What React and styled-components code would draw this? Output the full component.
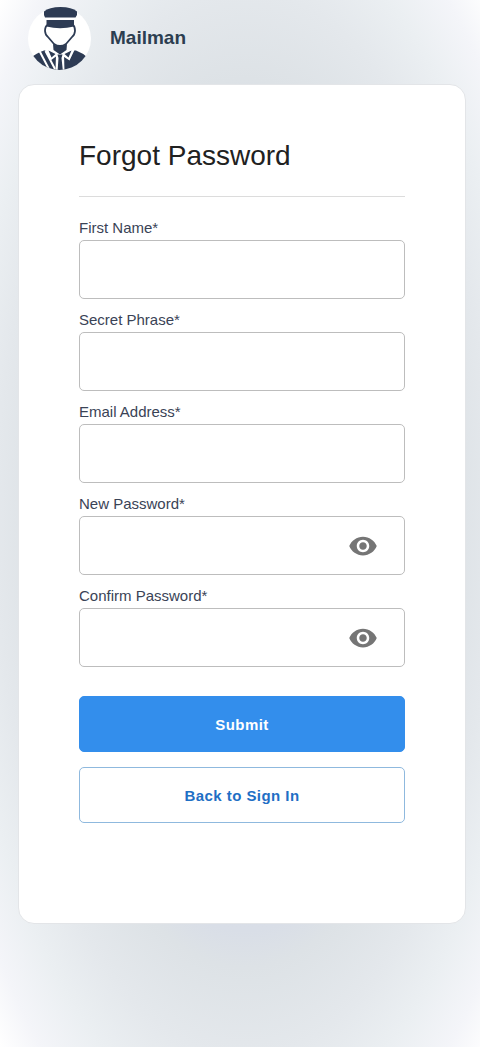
import React, { useState } from "react";
import styled, { createGlobalStyle } from "styled-components";
import { MdVisibility } from "react-icons/md";

const GlobalStyle = createGlobalStyle`
  *, *::before, *::after { box-sizing: border-box; }
  body {
    margin: 0;
    font-family: "Liberation Sans", Arial, sans-serif;
    background: #fff;
  }
`;

const Page = styled.div`
  min-height: 100vh;
  padding: 6px 14px 24px 18px;
  background: radial-gradient(ellipse farthest-corner at 51% 50%, #ccd3df 0%, #d9dee7 55%, #dde2e6 60%, #e4e8ec 72%, #ebeff2 82%, #f4f5f9 92%, #fff 100%);
`;

const Header = styled.header`
  display: flex;
  align-items: center;
  gap: 18px;
  height: 64px;
  padding-left: 10px;
  margin-bottom: 14px;
`;

const Logo = styled.svg`
  width: 64px;
  height: 64px;
  flex: none;
`;

const Brand = styled.span`
  font-size: 19px;
  line-height: 24px;
  font-weight: 700;
  color: #2c3e50;
`;

const Card = styled.main`
  min-height: 840px;
  padding: 54px 60px;
  background: #fff;
  border: 1px solid #e3e5e8;
  border-radius: 16px;
`;

const Title = styled.h1`
  margin: 0 0 22px;
  padding-bottom: 24px;
  border-bottom: 1px solid #dcdcdc;
  font-size: 28px;
  line-height: 33px;
  font-weight: 400;
  color: #212121;
`;

const Form = styled.form`
  display: flex;
  flex-direction: column;
`;

const Field = styled.div`
  margin-bottom: 12px;
`;

const Label = styled.label`
  display: block;
  padding-bottom: 3px;
  font-size: 15px;
  line-height: 18px;
  color: #3a4356;
`;

const InputBox = styled.div`
  display: flex;
  align-items: center;
  height: 59px;
  padding-right: 26px;
  border: 1px solid #bdbdbd;
  border-radius: 5px;

  &:focus-within { border-color: #338eec; }
`;

const Input = styled.input`
  flex: 1;
  min-width: 0;
  height: 100%;
  padding: 0 14px;
  border: 0;
  outline: 0;
  background: transparent;
  font: inherit;
  font-size: 16px;
  color: #212121;
`;

const EyeButton = styled.button`
  display: flex;
  padding: 0;
  border: 0;
  background: none;
  color: #757575;
  cursor: pointer;
`;

const Actions = styled.div`
  display: grid;
  gap: 15px;
  margin-top: 17px;
`;

const Button = styled.button`
  height: 56px;
  border: 1px solid ${(p) => (p.$primary ? "#338eec" : "#8fb9de")};
  border-radius: 5px;
  background: ${(p) => (p.$primary ? "#338eec" : "#fff")};
  color: ${(p) => (p.$primary ? "#fff" : "#1f6fc5")};
  font: inherit;
  font-size: 15px;
  font-weight: 700;
  letter-spacing: 0.03em;
  cursor: pointer;
`;

function MailmanLogo() {
  return (
    <Logo viewBox="0 0 64 64" aria-hidden="true">
      <defs>
        <clipPath id="badge"><circle cx="31.5" cy="32.5" r="31.5" /></clipPath>
      </defs>
      <circle cx="31.5" cy="32.5" r="31.5" fill="#fff" />
      <g fill="#2d3b54">
        <path d="M16 5.5Q21 1 32.5 1T49 5.5V9L47.5 11.5H17L16 9Z" />
        <path d="M18.5 14H46V20.500Q32 24 18.500 20.500Z" />
      </g>
      <path d="M19.500 19Q17 20.500 17 25Q17.500 29.500 20 31L26 38Q29 40 32 40Q35 40 38 38L44 31Q46.500 29.500 47 25Q47 20.500 45 19" fill="none" stroke="#2d3b54" strokeWidth="1.800" strokeLinejoin="round" />
      <g clipPath="url(#badge)" fill="#2d3b54">
        <path d="M24 44L16 44.500Q8 47 3 52V65H60V52Q55 47 48 44.500L40 44L34 49H30Z" />
        <path d="M23 41L16.500 43L22.500 54.500L31.500 48L41.500 54.500L47 43L41 41L32 46Z" fill="#fff" />
        <path d="M25 38Q28 40 32 40Q36 40 39 38L38.500 44L32 48.500L25.500 44Z" />
        <path d="M20.500 44.500L27.500 48L23.500 51.500ZM43.500 44.500L36.500 48L40.500 51.500Z" />
        <path d="M28 48H36L36.500 66H27.500Z" fill="#fff" />
        <path d="M29.500 48.500H34.500L33.500 52L35 66H29.500L30.500 52Z" />
        <path d="M11.500 45L22.500 66M17.500 45L27 63" fill="none" stroke="#fff" strokeWidth="2" />
      </g>
    </Logo>
  );
}

const FIELDS = [
  { id: "firstName", label: "First Name*" },
  { id: "secretPhrase", label: "Secret Phrase*" },
  { id: "email", label: "Email Address*", type: "email" },
  { id: "newPassword", label: "New Password*", type: "password" },
  { id: "confirmPassword", label: "Confirm Password*", type: "password" },
];

function FormField({ id, label, type = "text" }) {
  const [visible, setVisible] = useState(false);
  const secret = type === "password";
  return (
    <Field>
      <Label htmlFor={id}>{label}</Label>
      <InputBox>
        <Input id={id} name={id} type={secret && visible ? "text" : type} />
        {secret && (
          <EyeButton type="button" aria-label="Toggle password visibility" onClick={() => setVisible(!visible)}>
            <MdVisibility size={30} />
          </EyeButton>
        )}
      </InputBox>
    </Field>
  );
}

export default function App() {
  return (
    <>
      <GlobalStyle />
      <Page>
        <Header>
          <MailmanLogo />
          <Brand>Mailman</Brand>
        </Header>
        <Card>
          <Title>Forgot Password</Title>
          <Form onSubmit={(e) => e.preventDefault()}>
            {FIELDS.map((field) => <FormField key={field.id} {...field} />)}
            <Actions>
              <Button type="submit" $primary>Submit</Button>
              <Button type="button">Back to Sign In</Button>
            </Actions>
          </Form>
        </Card>
      </Page>
    </>
  );
}
